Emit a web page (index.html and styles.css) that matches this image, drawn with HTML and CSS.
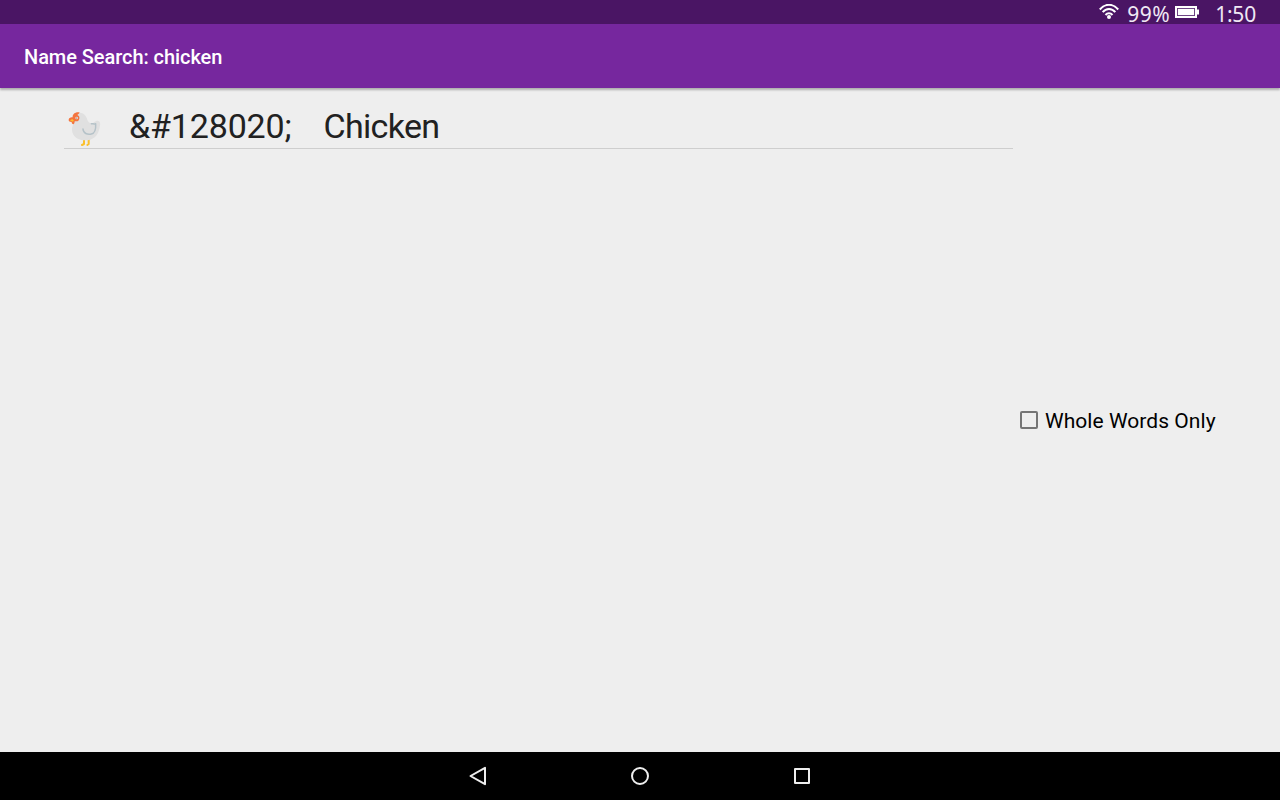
FILE: index.html
```html
<!DOCTYPE html>
<html lang="en">
  <head>
    <meta charset="utf-8">
    <title>Name Search: chicken</title>
    <link rel="stylesheet" href="styles.css">
  </head>
  <body>
    <div class="status-bar">
      <svg class="wifi" width="20" height="16" viewBox="0 0 20 16">
        <path d="M.8 5.500C6-.8 14-.8 19.200 5.500M3.700 8.200c3.500-4.300 9.100-4.300 12.600 0M6.500 11c2-2.400 5-2.400 7 0" fill="none" stroke="#fff" stroke-width="2"/>
        <circle cx="10" cy="13" r="2" fill="#fff"/>
      </svg>
      <span class="percent">99%</span>
      <svg class="battery" width="24" height="12" viewBox="0 0 24 12">
        <path d="M1 1h20v10H1z" fill="none" stroke="#fff" stroke-width="2"/>
        <path d="M3 3h16v6H3zM22 3.500h2v5h-2z" fill="#fff"/>
        <path d="M2.500 2.500h17v7h-17z" fill="none" stroke="#6f4585"/>
      </svg>
      <span class="clock">1:50</span>
    </div>
    <div class="app-bar">
      <h1>Name Search: chicken</h1>
    </div>
    <div class="content">
      <div class="results">
        <div class="row">
          <svg class="emoji" width="36" height="38" viewBox="18 30 108 114">
            <path d="M72 117v15l-6 3M86 117v15l-4 3" fill="none" stroke="#fbc02d" stroke-width="6" stroke-linecap="round" stroke-linejoin="round"/>
            <path d="M43 46C52 34 70 36 77 48C83 58 82 66 92 70C102 71 105 61 114 62C123 64 121 76 118 86C113 110 97 121 76 121C53 121 37 108 36 90C35 77 45 69 43 46z" fill="#e0e0e0"/>
            <path d="M69 87c1 14 13 17 25 15c12-2 14-14 13-31c-5 2-8 0-13 0" fill="none" stroke="#b5c2c8" stroke-width="4.500" stroke-linecap="round" stroke-linejoin="round"/>
            <path d="M38 52c-1-10 8-17 20-15c2 3-3 5-6 8c6 2 8 8 5 14c-3 6-9 5-13 5c0 12-9 10-9 2c-9 1-11-6-7-11c3-3 6-3 10-3z" fill="#f4743f"/>
            <circle cx="50" cy="54" r="4" fill="#e4ddda"/>
            <circle cx="50" cy="54" r="1.500" fill="#7d6964"/>
            <path d="M30 61l7-4 5 5-5 3z" fill="#fbc02d"/>
          </svg>
          <span class="code">&amp;#128020;</span>
          <span class="name">Chicken</span>
        </div>
      </div>
      <label class="whole-words">
        <input type="checkbox">
        <span>Whole Words Only</span>
      </label>
    </div>
    <div class="nav-bar">
      <svg width="20" height="20" viewBox="0 0 20 20"><path d="M2.500 10L17 1.800v16.400z"/></svg>
      <svg width="20" height="20" viewBox="0 0 20 20"><circle cx="10" cy="10" r="8"/></svg>
      <svg width="20" height="20" viewBox="0 0 20 20"><path d="M3 3h14v14H3z"/></svg>
    </div>
  </body>
</html>
```
FILE: styles.css
```css
body {
  margin: 0;
  height: 100vh;
  display: flex;
  flex-direction: column;
  overflow: hidden;
  background-color: #eee;
  font-family: Roboto, sans-serif;
}

.status-bar {
  height: 24px;
  display: flex;
  justify-content: flex-end;
  padding-right: 24px;
  background-color: #4a1564;
  color: #f0e8f4;
  font-family: "Noto Sans", sans-serif;
  font-size: 21px;
  line-height: 28px;
}

.wifi {
  margin: 4px 8px 0 0;
}

.percent {
  letter-spacing: 0.5px;
}

.battery {
  margin: 6px 16px 0 5px;
}

.clock {
  letter-spacing: -0.2px;
}

.app-bar {
  height: 64px;
  display: flex;
  align-items: center;
  padding: 0 24px;
  background-color: #76279e;
  box-shadow: 0 2px 2px rgba(0, 0, 0, 0.27);
}

.app-bar h1 {
  margin: 2px 0 0;
  color: #fff;
  font-size: 20px;
  font-weight: 500;
  letter-spacing: -0.06px;
}

.content {
  flex: 1;
  display: flex;
  padding: 16px 64px;
}

.results {
  width: 949px;
}

.row {
  height: 44px;
  display: flex;
  border-bottom: 1px solid #cecece;
  color: #212121;
  font-size: 34px;
  line-height: 44px;
}

.emoji {
  margin: 6px 27px 0 2px;
}

.code {
  letter-spacing: -0.15px;
}

.name {
  margin-left: 32px;
  letter-spacing: -0.7px;
}

.whole-words {
  display: flex;
  align-items: center;
  color: #000;
  margin-left: 7px;
  font-size: 21px;
  letter-spacing: 0.05px;
  white-space: nowrap;
}

.whole-words input {
  appearance: none;
  width: 18px;
  height: 18px;
  margin: 0 7px 0 0;
  border: 2px solid #757575;
  border-radius: 2px;
}

.whole-words span {
  padding-top: 1px;
}

.nav-bar {
  height: 48px;
  display: flex;
  align-items: center;
  justify-content: center;
  gap: 142px;
  background-color: #000;
}

.nav-bar svg {
  fill: none;
  stroke: #eee;
  stroke-width: 2;
  stroke-linejoin: round;
}
```
